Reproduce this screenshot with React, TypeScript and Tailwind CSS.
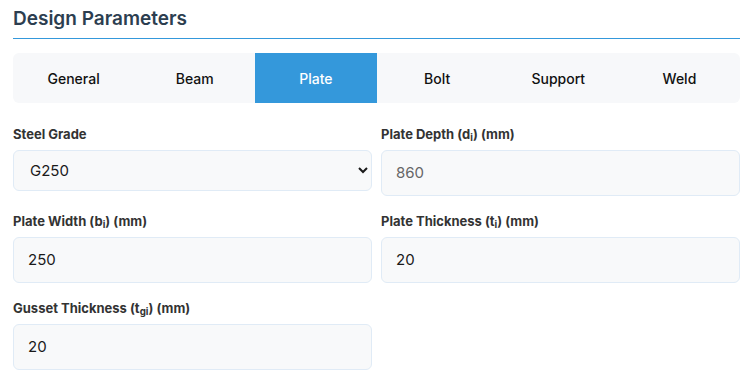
import React, { useState } from 'react';

const tabs = ['General', 'Beam', 'Plate', 'Bolt', 'Support', 'Weld'];

function Field({ label, children }: { label: React.ReactNode; children: React.ReactNode }) {
  return (
    <div className="flex flex-col">
      <label className="mb-1.5 text-[13px] leading-[19px] font-bold text-[#333]">{label}</label>
      {children}
    </div>
  );
}

const inputCls =
  'w-full rounded-md border border-[#e0ebf6] bg-[#f8f9fa] px-3.5 py-3 text-[15px] leading-5 text-[#1a1a1a] outline-none';

export default function App() {
  const [active, setActive] = useState('Plate');

  return (
    <div className="min-h-[383px] bg-white px-[13px] pt-2 font-['Inter',sans-serif]">
      <h2 className="border-b border-[#3498db] pb-2 text-[19px] leading-[22px] font-semibold text-[#2c3e50]">
        Design Parameters
      </h2>

      <div className="mt-3.5 flex h-[50px] overflow-hidden rounded-md bg-[#f7f8fa]">
        {tabs.map(t => (
          <button
            key={t}
            onClick={() => setActive(t)}
            className={
              t === active
                ? 'flex-1 bg-[#3498db] text-[14px] font-medium text-white'
                : 'flex-1 text-[14px] font-medium text-[#111]'
            }
          >
            {t}
          </button>
        ))}
      </div>

      <div className="mt-[22px] grid grid-cols-2 gap-x-[9px] gap-y-4">
        <Field label="Steel Grade">
          <select
            defaultValue="G250"
            className="h-[41px] w-full rounded-md border border-[#e0ebf6] bg-[#f8f9fa] px-3 text-[15px] text-[#1a1a1a] outline-none"
          >
            <option>G250</option>
            <option>G300</option>
            <option>G350</option>
          </select>
        </Field>
        <Field label={<>Plate Depth (d<sub>i</sub>) (mm)</>}>
          <input className={inputCls + ' !text-[#666]'} defaultValue="860" readOnly />
        </Field>
        <Field label={<>Plate Width (b<sub>i</sub>) (mm)</>}>
          <input className={inputCls} defaultValue="250" />
        </Field>
        <Field label={<>Plate Thickness (t<sub>i</sub>) (mm)</>}>
          <input className={inputCls} defaultValue="20" />
        </Field>
        <Field label={<>Gusset Thickness (t<sub>gi</sub>) (mm)</>}>
          <input className={inputCls} defaultValue="20" />
        </Field>
      </div>
    </div>
  );
}
